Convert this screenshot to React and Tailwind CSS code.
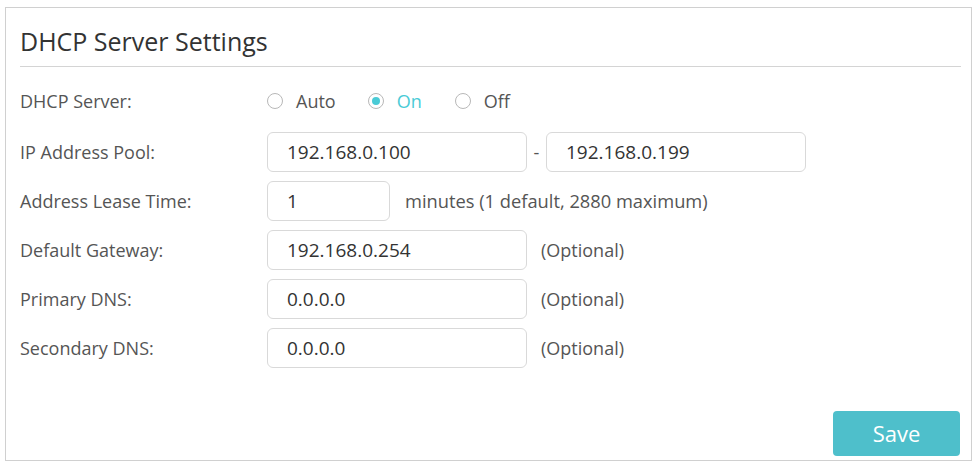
import React from "react";

const font = { fontFamily: '"Open Sans", "Noto Sans", Arial, sans-serif' };

function Radio({ label, checked }) {
  return (
    <label className="flex items-center">
      <span className="w-[16px] h-[16px] rounded-full border border-[#b8b8b8] flex items-center justify-center bg-white">
        {checked && <span className="w-[8px] h-[8px] rounded-full bg-[#4acbd6]" />}
      </span>
      <span className={`ml-[13px] text-[18px] ${checked ? "text-[#4acbd6]" : "text-[#555]"}`}>{label}</span>
    </label>
  );
}

function Input({ value, w = "w-[260px]" }) {
  return (
    <div
      className={`${w} h-[40px] border border-[#d9d9d9] rounded-[6px] flex items-center pl-[19px] text-[19px] text-[#333] bg-white`}
    >
      {value}
    </div>
  );
}

function Row({ label, children }) {
  return (
    <div className="flex items-center h-[40px]">
      <div className="w-[247px] text-[18px] text-[#555]">{label}</div>
      <div className="flex items-center">{children}</div>
    </div>
  );
}

export default function App() {
  return (
    <div className="w-[976px] h-[462px] bg-white pl-[5px] pt-[7px]" style={font}>
      <div className="w-[967px] h-[454px] border border-[#d0d0d0] flex flex-col">
        <div className="ml-[14px] mr-[10px] pt-[16px] h-[59px] border-b border-[#d4d4d4]">
          <div className="text-[25px] leading-[34px] text-[#333]">DHCP Server Settings</div>
        </div>
        <div className="pl-[14px] mt-[14px] flex flex-col">
          <Row label="DHCP Server:">
            <div className="flex items-center">
              <Radio label="Auto" />
              <div className="ml-[32px]"><Radio label="On" checked /></div>
              <div className="ml-[33px]"><Radio label="Off" /></div>
            </div>
          </Row>
          <div className="mt-[11px] flex flex-col gap-[9px]">
            <Row label="IP Address Pool:">
              <Input value="192.168.0.100" />
              <span className="w-[19px] text-center text-[18px] text-[#555]">-</span>
              <Input value="192.168.0.199" />
            </Row>
            <Row label="Address Lease Time:">
              <Input value="1" w="w-[123px]" />
              <span className="ml-[15px] text-[18.3px] text-[#555]">minutes (1 default, 2880 maximum)</span>
            </Row>
            <Row label="Default Gateway:">
              <Input value="192.168.0.254" />
              <span className="ml-[14px] text-[18px] text-[#555]">(Optional)</span>
            </Row>
            <Row label="Primary DNS:">
              <Input value="0.0.0.0" />
              <span className="ml-[14px] text-[18px] text-[#555]">(Optional)</span>
            </Row>
            <Row label="Secondary DNS:">
              <Input value="0.0.0.0" />
              <span className="ml-[14px] text-[18px] text-[#555]">(Optional)</span>
            </Row>
          </div>
        </div>
        <div className="flex justify-end mt-[43px] mr-[11px]">
          <button className="w-[127px] h-[45px] rounded-[4px] bg-[#4ebfcb] text-white text-[22px]">Save</button>
        </div>
      </div>
    </div>
  );
}
